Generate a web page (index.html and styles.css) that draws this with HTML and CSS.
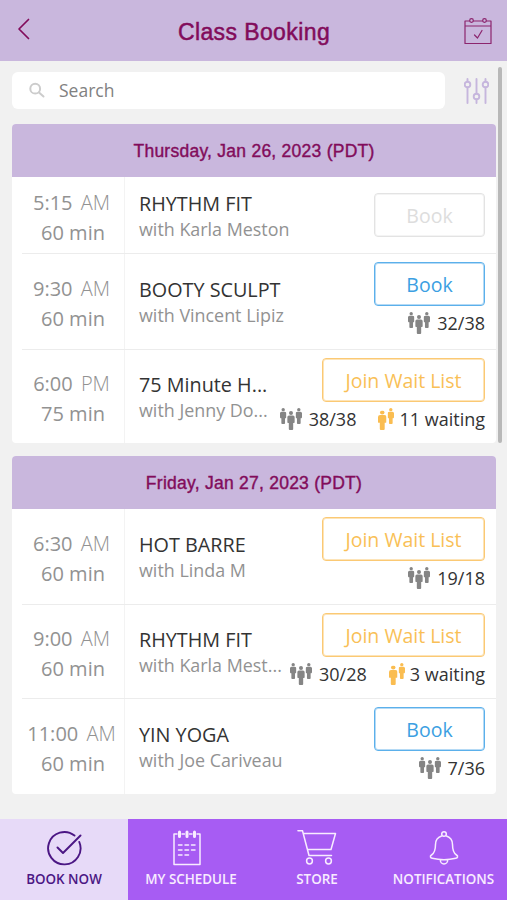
FILE: index.html
```html
<!DOCTYPE html>
<html lang="en">
<head>
<meta charset="utf-8">
<title>Class Booking</title>
<link rel="stylesheet" href="styles.css">
</head>
<body>
<svg class="defs" width="0" height="0" aria-hidden="true">
  <symbol id="person" viewBox="0 0 8 18" preserveAspectRatio="none">
    <ellipse cx="4" cy="1.900" rx="2.100" ry="1.800"/>
    <path d="M2 4.200h4Q8 4.200 8 6V10.500q0 .9-.8.9h-.9V17q0 1-1 1H2.700q-1 0-1-1v-5.600H.8q-.8 0-.8-.9V6Q0 4.200 2 4.200z"/>
  </symbol>
  <symbol id="group" viewBox="0 0 22 22">
    <use href="#person" x="0" y="0" width="6.400" height="16"/>
    <use href="#person" x="15.600" y="0" width="6.400" height="16"/>
    <use href="#person" x="7.200" y="3" width="7.600" height="19"/>
  </symbol>
  <symbol id="pair" viewBox="0 0 16 22">
    <use href="#person" x="0" y="2.500" width="8.500" height="19.500"/>
    <use href="#person" x="9.600" y="0" width="6.400" height="16"/>
  </symbol>
</svg>
<div class="app">
  <header class="topbar">
    <svg class="back" width="14" height="22" viewBox="0 0 14 22"><path d="M11.500 1.500 2 11l9.500 9.500"/></svg>
    <h1>Class Booking</h1>
    <svg class="calendar" width="28" height="28" viewBox="0 0 28 28">
      <path d="M5.500 4H1v22.500h26V4h-4.500M9.500 4h9M1 9h26M10.500 18l3 3 4.500-7.500"/>
      <circle cx="7.500" cy="3.500" r="1.800"/><circle cx="20.500" cy="3.500" r="1.800"/>
    </svg>
  </header>

  <div class="searchbar">
    <div class="search">
      <svg width="16" height="16" viewBox="0 0 16 16"><circle cx="6.200" cy="6.700" r="4.900"/><path d="m10 10.500 4.500 4"/></svg>
      <span>Search</span>
    </div>
    <svg class="filters" width="25" height="26" viewBox="0 0 25 26">
      <path d="M3.500 1v2.500M3.500 9.500V25M12.500 1v14.500M12.500 21.500V25M21.500 1v2.500M21.500 9.500V25"/>
      <circle cx="3.500" cy="6.500" r="2.800"/><circle cx="12.500" cy="18.500" r="2.800"/><circle cx="21.500" cy="6.500" r="2.800"/>
    </svg>
  </div>

  <main>
    <section class="day">
      <h2>Thursday, Jan 26, 2023 (PDT)</h2>
      <div class="row short">
        <div class="time"><p>5:15 <i>AM</i></p><p>60 min</p></div>
        <div class="info"><h3>RHYTHM FIT</h3><p>with Karla Meston</p></div>
        <div class="actions"><button class="btn off">Book</button></div>
      </div>
      <div class="row tall">
        <div class="time"><p>9:30 <i>AM</i></p><p>60 min</p></div>
        <div class="info"><h3>BOOTY SCULPT</h3><p>with Vincent Lipiz</p></div>
        <div class="actions"><button class="btn">Book</button>
          <div class="stats"><svg class="group"><use href="#group"/></svg><span>32/38</span></div></div>
      </div>
      <div class="row">
        <div class="time"><p>6:00 <i>PM</i></p><p>75 min</p></div>
        <div class="info"><h3>75 Minute H...</h3><p>with Jenny Do...</p></div>
        <div class="actions"><button class="btn wait">Join Wait List</button>
          <div class="stats"><svg class="group"><use href="#group"/></svg><span>38/38</span><svg class="pair"><use href="#pair"/></svg><span>11 waiting</span></div></div>
      </div>
    </section>

    <section class="day">
      <h2>Friday, Jan 27, 2023 (PDT)</h2>
      <div class="row first">
        <div class="time"><p>6:30 <i>AM</i></p><p>60 min</p></div>
        <div class="info"><h3>HOT BARRE</h3><p>with Linda M</p></div>
        <div class="actions"><button class="btn wait">Join Wait List</button>
          <div class="stats"><svg class="group"><use href="#group"/></svg><span>19/18</span></div></div>
      </div>
      <div class="row">
        <div class="time"><p>9:00 <i>AM</i></p><p>60 min</p></div>
        <div class="info"><h3>RHYTHM FIT</h3><p>with Karla Mest...</p></div>
        <div class="actions"><button class="btn wait">Join Wait List</button>
          <div class="stats"><svg class="group"><use href="#group"/></svg><span>30/28</span><svg class="pair"><use href="#pair"/></svg><span>3 waiting</span></div></div>
      </div>
      <div class="row tall">
        <div class="time"><p>11:00 <i>AM</i></p><p>60 min</p></div>
        <div class="info"><h3>YIN YOGA</h3><p>with Joe Cariveau</p></div>
        <div class="actions"><button class="btn">Book</button>
          <div class="stats"><svg class="group"><use href="#group"/></svg><span>7/36</span></div></div>
      </div>
    </section>
  </main>

  <nav class="tabs">
    <a class="tab active">
      <svg width="36" height="36" viewBox="0 0 36 36"><path d="M28.500 5.600A16.200 16.200 0 1 0 33.300 12M11.500 17.500l5.500 5.500L34.500 5.500"/></svg>
      <span>BOOK NOW</span>
    </a>
    <a class="tab">
      <svg width="36" height="36" viewBox="0 0 36 36"><path d="M4 4H1V34.500H27V4h-3M9 4h2.500M16.500 4H19M5.500 15h3.500m3 0h3.500m3 0H22M5.500 20h3.500m3 0h3.500m3 0H22M5.500 25h3.500m3 0h3.500"/><path class="ring" d="M6.500 2v4.500M14 2v4.500M21.500 2v4.500"/></svg>
      <span>MY SCHEDULE</span>
    </a>
    <a class="tab">
      <svg class="cart" width="40" height="36" viewBox="0 0 40 36"><path d="M1 .7h4.500L12 25.500h22.500M6.300 3.500H38.500l-4.500 16H10.400"/><circle cx="12.500" cy="31" r="2.900"/><circle cx="31.500" cy="31" r="2.900"/></svg>
      <span>STORE</span>
    </a>
    <a class="tab">
      <svg width="36" height="36" viewBox="0 0 36 36"><circle cx="18" cy="4" r="2.300"/><path d="M15.500 6Q9.500 8 9.500 14.500c0 6-.8 8.500-4 10.500-2 1.300-1 3 .7 3.300Q18 31 29.800 28.300c1.700-.3 2.700-2 .7-3.300-3.200-2-4-4.500-4-10.500Q26.500 8 20.500 6M14.300 30a3.700 4 0 0 0 7.400 0"/></svg>
      <span>NOTIFICATIONS</span>
    </a>
  </nav>
  <div class="scrollbar"></div>
</div>
</body>
</html>
```
FILE: styles.css
```css
* { box-sizing: border-box; margin: 0; padding: 0; }

body {
  background: #f1f1f1;
  color: #333;
  font-family: "Open Sans", sans-serif;
}

.defs { position: absolute; }

.app {
  position: relative;
  display: flex;
  flex-direction: column;
  width: 507px;
  height: 900px;
  overflow: hidden;
}

svg { flex: none; fill: none; stroke-linecap: round; stroke-linejoin: round; }

.topbar {
  display: flex;
  justify-content: space-between;
  align-items: center;
  height: 61px;
  padding: 0 15px 0 17px;
  background: #c9b7dd;
  color: #820c5b;
}
.topbar svg { stroke: currentColor; }
.topbar .back { stroke-width: 1.7; margin-bottom: 4px; }
.topbar .calendar { stroke-width: 1.2; opacity: .85; }
h1 {
  padding: 4px 0 0 13px;
  font: 400 23px "Liberation Sans", sans-serif;
  letter-spacing: .4px;
  -webkit-text-stroke: .5px;
}

.searchbar {
  display: flex;
  align-items: center;
  gap: 19px;
  height: 37px;
  margin: 11px 12px 15px;
}
.search {
  display: flex;
  align-items: center;
  gap: 14px;
  width: 433px;
  height: 37px;
  padding: 0 0 2px 17px;
  border-radius: 6px;
  background: #fff;
  color: #818181;
  font-size: 17.500px;
}
.search svg { stroke: #ccc; stroke-width: 2; }
.filters { stroke: #c6b6dd; stroke-width: 1.900; }

main { display: flex; flex-direction: column; gap: 13px; width: 484px; margin-left: 12px; }
.day { border-radius: 4px; overflow: hidden; background: #fff; }
h2 {
  height: 53px;
  background: #c9b7dd;
  color: #820c5b;
  font: 400 17.500px/55px "Liberation Sans", sans-serif;
  letter-spacing: .25px;
  text-align: center;
  -webkit-text-stroke: .4px;
}

.row {
  position: relative;
  display: flex;
  height: 94px;
  margin-left: 10px;
  padding-right: 11px;
}
.row + .row { border-top: 1px solid #ececec; }
.row.first { height: 95px; }
.row.short { height: 76px; }
.row.tall { height: 96px; }

.time {
  display: flex;
  flex-direction: column;
  justify-content: center;
  width: 103px;
  padding-top: 4px;
  border-right: 1px solid #f3f3f3;
  color: #929292;
  font-size: 20px;
  line-height: 29.500px;
  text-align: center;
  white-space: nowrap;
}
.time p:first-child { margin-right: 3px; }
.time i { margin-left: 3px; font-style: normal; font-weight: 300; }
.short .time { padding-top: 5px; }

.info {
  display: flex;
  flex: 1;
  flex-direction: column;
  justify-content: center;
  min-width: 0;
  padding: 1px 0 0 14px;
  white-space: nowrap;
}
.short .info { padding-top: 3px; }
.info h3 { font-size: 19.800px; font-weight: 400; line-height: 26px; }
.info p { color: #929292; font-size: 17.900px; line-height: 25px; }

.actions { display: flex; flex-direction: column; align-items: flex-end; padding-top: 8px; }
.first .actions { padding-top: 8px; }
.short .actions { padding-top: 16px; }
.btn {
  width: 111px;
  height: 44px;
  border: 1px solid #5bb0eb;
  border-radius: 4px;
  box-shadow: inset 0 0 0 1px #b5daf5;
  background: #fff;
  color: #3c9fe2;
  font: 400 19.500px "Open Sans", sans-serif;
}
.btn.wait { width: 163px; border-color: #fbc974; box-shadow: inset 0 0 0 1px #fde4b8; color: #f9bf57; }
.btn.off { border-color: #e3e3e3; box-shadow: inset 0 0 0 1px #f4f4f4; color: #ddd; }

.stats { display: flex; align-items: center; gap: 7px; height: 34px; font-size: 18px; }
.stats svg { stroke: none; }
.group { width: 22px; height: 22px; fill: #858585; }
.pair { width: 16px; height: 22px; margin-left: 15px; fill: #fabd51; }
.pair + span { margin-left: -2px; }

.tabs { display: grid; grid-template-columns: 128px 126px 126px 127px; height: 81px; margin-top: auto; }
.tab {
  display: flex;
  flex-direction: column;
  align-items: center;
  gap: 3px;
  padding-top: 11px;
  background: #a75cf3;
  color: #f8ecff;
  font-size: 13.400px;
  font-weight: 600;
  line-height: 20px;
  white-space: nowrap;
}
.tab svg { stroke: currentColor; stroke-width: 1.500; }
.tab .ring { stroke-width: 3; }
.tab.active { background: #e7daf8; color: #4b1684; }
.tab.active svg { stroke-width: 1.900; }

.scrollbar {
  position: absolute;
  top: 67px;
  right: 5px;
  width: 4px;
  height: 376px;
  border-radius: 2px;
  background: #b8b8b8;
}
```
